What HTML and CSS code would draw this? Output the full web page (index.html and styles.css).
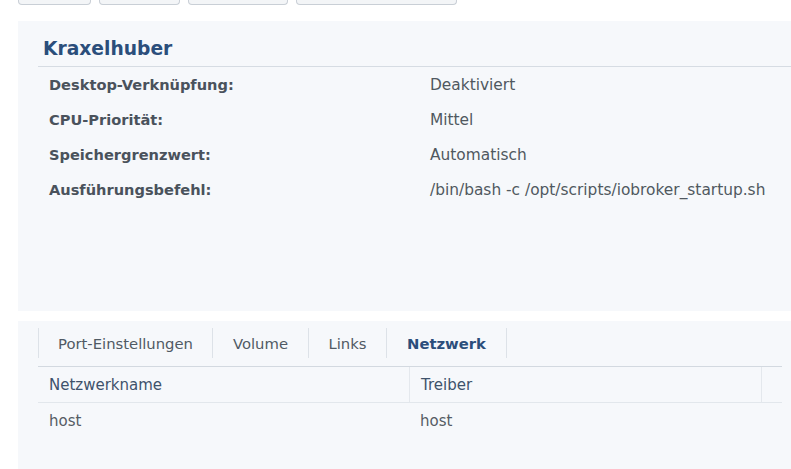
FILE: index.html
```html
<!DOCTYPE html>
<html>
<head>
<meta charset="utf-8">
<link rel="stylesheet" href="styles.css">
</head>
<body>
<div class="toolbar">
  <div class="tbtn w1"></div>
  <div class="tbtn w2"></div>
  <div class="tbtn w3"></div>
  <div class="tbtn w4"></div>
</div>
<section class="panel info">
  <h2 class="title">Kraxelhuber</h2>
  <div class="rows">
    <div class="row"><span class="label">Desktop-Verknüpfung:</span><span class="value">Deaktiviert</span></div>
    <div class="row"><span class="label">CPU-Priorität:</span><span class="value">Mittel</span></div>
    <div class="row"><span class="label">Speichergrenzwert:</span><span class="value">Automatisch</span></div>
    <div class="row"><span class="label">Ausführungsbefehl:</span><span class="value">/bin/bash -c /opt/scripts/iobroker_startup.sh</span></div>
  </div>
</section>
<section class="panel tabs-panel">
  <div class="tabs">
    <div class="tab t1">Port-Einstellungen</div>
    <div class="tab t2">Volume</div>
    <div class="tab t3">Links</div>
    <div class="tab t4 active">Netzwerk</div>
  </div>
  <div class="table">
    <div class="thead">
      <div class="th c1">Netzwerkname</div>
      <div class="th c2">Treiber</div>
      <div class="th c3"></div>
    </div>
    <div class="trow">
      <div class="td c1">host</div>
      <div class="td c2">host</div>
      <div class="td c3"></div>
    </div>
  </div>
</section>
</body>
</html>
```
FILE: styles.css
```css
html, body {
  margin: 0;
  padding: 0;
  background: #ffffff;
  font-family: "DejaVu Sans", Verdana, sans-serif;
  font-size: 15px;
  color: #505a64;
  overflow: hidden;
}
.toolbar {
  display: flex;
  gap: 8px;
  padding-left: 18px;
  height: 21px;
  align-items: flex-start;
}
.tbtn {
  height: 4px;
  background: #f3f5f7;
  border: 1px solid #c9cfd6;
  border-top: none;
  border-radius: 0 0 4px 4px;
}
.w1 { width: 71px; }
.w2 { width: 79px; }
.w3 { width: 98px; }
.w4 { width: 159px; }
.panel {
  background: #f6f8fb;
  margin-left: 18px;
}
.info {
  height: 290px;
  padding: 0 0 0 20px;
  box-sizing: border-box;
}
.title {
  margin: 0;
  padding: 17px 0 7px 5px;
  font-size: 18.7px;
  font-weight: bold;
  color: #2b4e7b;
  line-height: 21px;
  border-bottom: 1px solid #d6dce3;
}
.rows {
  padding: 0 0 0 11px;
}
.row {
  display: flex;
  align-items: center;
  height: 35px;
}
.label {
  width: 381px;
  font-weight: bold;
  font-size: 14.6px;
  line-height: 18px;
  color: #4a525c;
}
.value {
  color: #505860;
  font-size: 15.4px;
  line-height: 18px;
}
.tabs-panel {
  margin-top: 10px;
  height: 148px;
  padding: 7px 9px 0 20px;
  box-sizing: border-box;
}
.tabs {
  display: flex;
  height: 30px;
  border-bottom: 1px solid #d3d9e0;
  padding-bottom: 8px;
}
.tab {
  border-left: 1px solid #dde2e8;
  text-align: center;
  line-height: 31px;
  height: 30px;
  color: #505a64;
  box-sizing: border-box;
  font-size: 14.8px;
}
.t1 { width: 174px; }
.t2 { width: 96px; }
.t3 { width: 78px; }
.t4 { width: 121px; border-right: 1px solid #dde2e8; }
.tab.active {
  font-weight: bold;
  color: #2b4e7b;
}
.thead, .trow {
  display: flex;
}
.thead {
  height: 35px;
  border-bottom: 1px solid #e2e7ec;
}
.th, .td {
  padding-left: 11px;
  padding-top: 1px;
  box-sizing: border-box;
}
.th {
  line-height: 34px;
  color: #3e526b;
}
.td {
  line-height: 35px;
  color: #555c64;
}
.c1 { width: 371px; }
.c2 { width: 352px; }
.c3 { flex: 1; }
.th.c2, .th.c3 {
  border-left: 1px solid #e4e8ed;
}
```
